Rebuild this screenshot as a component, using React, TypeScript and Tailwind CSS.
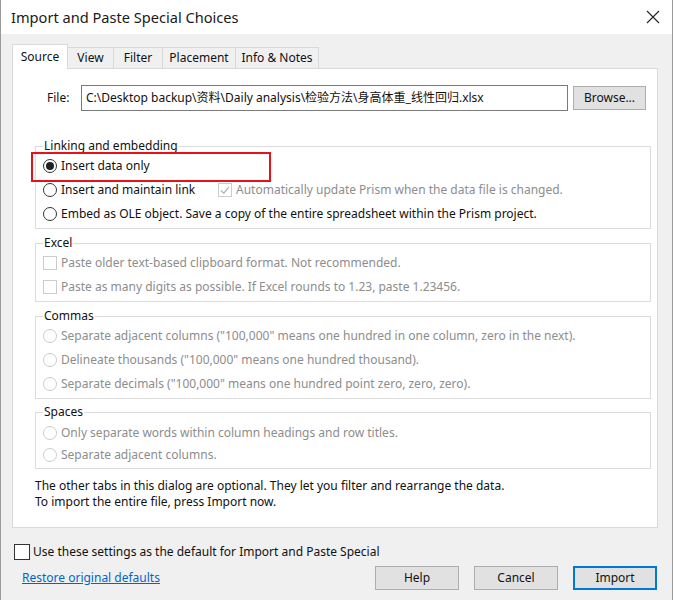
import type { ReactNode } from 'react';

const font = "font-['Noto_Sans','Noto_Sans_CJK_SC',sans-serif]";

function Radio({
  checked = false,
  disabled = false,
  children,
}: {
  checked?: boolean;
  disabled?: boolean;
  children?: ReactNode;
}) {
  return (
    <div className="flex items-center gap-[4px]">
      <span
        className={
          'flex h-[14px] w-[14px] shrink-0 items-center justify-center rounded-full border bg-white ' +
          (disabled ? 'border-[#cccccc]' : 'border-[#333333]')
        }
      >
        {checked && <span className="h-[8px] w-[8px] rounded-full bg-[#222222]" />}
      </span>
      <span className={disabled ? 'text-[#8d8d8d]' : 'text-[#111111]'}>{children}</span>
    </div>
  );
}

function Check({
  checked = false,
  disabled = false,
  children,
}: {
  checked?: boolean;
  disabled?: boolean;
  children?: ReactNode;
}) {
  return (
    <div className="flex items-center gap-[4px]">
      <span
        className={
          'flex h-[14px] w-[14px] shrink-0 items-center justify-center border bg-white ' +
          (disabled ? 'border-[#cccccc]' : 'border-[#333333]')
        }
      >
        {checked && (
          <svg width="12" height="12" viewBox="0 0 12 12">
            <path d="M2 6.5 L4.8 9.2 L10 2.8" fill="none" stroke="#b5b5b5" strokeWidth="1.3" />
          </svg>
        )}
      </span>
      <span className={disabled ? 'text-[#8d8d8d]' : 'text-[#111111]'}>{children}</span>
    </div>
  );
}

function Group({ title, children }: { title: string; children: ReactNode }) {
  return (
    <fieldset className="border border-[#dcdcdc] pl-[7px] pr-2 pb-[2px]">
      <legend className="px-[1px] leading-[16px] text-[#111111]">{title}</legend>
      {children}
    </fieldset>
  );
}

const tabs = [
  { label: 'Source', w: 'w-[56px]' },
  { label: 'View', w: 'w-[47px]' },
  { label: 'Filter', w: 'w-[50px]' },
  { label: 'Placement', w: 'w-[74px]' },
  { label: 'Info & Notes', w: 'w-[84px]' },
];

function Button({ label, primary = false }: { label: string; primary?: boolean }) {
  return (
    <button
      className={
        'h-[24px] w-[84px] bg-[#e1e1e1] text-[#111111] ' +
        (primary ? 'border-2 border-[#0078d7]' : 'border border-[#adadad]')
      }
    >
      {label}
    </button>
  );
}

export default function App() {
  return (
    <div
      className={
        font +
        ' flex h-[600px] w-[673px] flex-col overflow-hidden border-x border-[#9a9a9a] bg-[#f0f0f0] text-[12px] leading-[16px]'
      }
    >
      {/* Title bar */}
      <div className="flex h-[34px] shrink-0 items-center justify-between bg-white pl-[10px] pr-[12px]">
        <span className="text-[14.6px] text-[#1a1a1a]">Import and Paste Special Choices</span>
        <svg width="14" height="14" viewBox="0 0 14 14">
          <path d="M1 1 L13 13 M13 1 L1 13" stroke="#222" strokeWidth="1.1" />
        </svg>
      </div>

      <div className="flex flex-col pl-[11px] pr-[14px] pt-[10px]">
        {/* Tabs */}
        <div className="flex items-end">
          {tabs.map((t, i) =>
            i === 0 ? (
              <div
                key={t.label}
                className={
                  t.w +
                  ' relative z-10 -mb-px flex h-[25px] items-center justify-center border border-b-0 border-[#d9d9d9] bg-white text-[#111111]'
                }
              >
                {t.label}
              </div>
            ) : (
              <div
                key={t.label}
                className={
                  t.w +
                  ' -ml-px flex h-[21px] items-center justify-center border border-b-0 border-[#d9d9d9] bg-[#f0f0f0] text-[#111111]'
                }
              >
                {t.label}
              </div>
            )
          )}
        </div>

        {/* Tab panel */}
        <div className="flex h-[460px] flex-col border border-[#d9d9d9] bg-white pl-[22px] pr-[6px] pt-[16px]">
          <div className="flex items-center">
            <span className="w-[46px] pl-[12px] text-[#111111]">File:</span>
            <div className="flex h-[26px] w-[487px] items-center border border-[#7a7a7a] bg-white pl-[4px] text-[#111111]">
              C:\Desktop backup\资料\Daily analysis\检验方法\身高体重_线性回归.xlsx
            </div>
            <button className="ml-[5px] h-[24px] w-[73px] border border-[#adadad] bg-[#e1e1e1] text-[#111111]">
              Browse...
            </button>
          </div>

          <div className="relative mt-[27px]">
            <Group title="Linking and embedding">
              <div className="flex h-[24px] items-center">
                <Radio checked>Insert data only</Radio>
              </div>
              <div className="flex h-[24px] items-center">
                <div className="w-[175px]">
                  <Radio>Insert and maintain link</Radio>
                </div>
                <Check checked disabled>
                  Automatically update Prism when the data file is changed.
                </Check>
              </div>
              <div className="flex h-[24px] items-center">
                <Radio>Embed as OLE object. Save a copy of the entire spreadsheet within the Prism project.</Radio>
              </div>
            </Group>
            {/* highlight annotation */}
            <div className="pointer-events-none absolute left-[-4px] top-[14px] h-[30px] w-[240px] border-2 border-[#e8111a]" />
          </div>

          <div className="mt-[6px]">
            <Group title="Excel">
              <div className="flex h-[24px] items-center">
                <Check disabled>Paste older text-based clipboard format. Not recommended.</Check>
              </div>
              <div className="flex h-[24px] items-center">
                <Check disabled>Paste as many digits as possible. If Excel rounds to 1.23, paste 1.23456.</Check>
              </div>
            </Group>
          </div>

          <div className="mt-[6px]">
            <Group title="Commas">
              <div className="flex h-[24px] items-center">
                <Radio disabled>
                  Separate adjacent columns ("100,000" means one hundred in one column, zero in the next).
                </Radio>
              </div>
              <div className="flex h-[24px] items-center">
                <Radio disabled>Delineate thousands ("100,000" means one hundred thousand).</Radio>
              </div>
              <div className="flex h-[24px] items-center">
                <Radio disabled>Separate decimals ("100,000" means one hundred point zero, zero, zero).</Radio>
              </div>
            </Group>
          </div>

          <div className="mt-[5px]">
            <Group title="Spaces">
              <div className="pt-[2px]">
                <div className="flex h-[22px] items-center">
                  <Radio disabled>Only separate words within column headings and row titles.</Radio>
                </div>
                <div className="flex h-[22px] items-center">
                  <Radio disabled>Separate adjacent columns.</Radio>
                </div>
              </div>
            </Group>
          </div>

          <div className="mt-[9px] text-[#111111]">
            <p>The other tabs in this dialog are optional. They let you filter and rearrange the data.</p>
            <p>To import the entire file, press Import now.</p>
          </div>
        </div>
      </div>

      {/* Footer */}
      <div className="mt-[16px] flex items-center gap-[3px] pl-[13px]">
        <span className="h-[16px] w-[16px] border border-[#333333] bg-white" />
        <span className="text-[#111111]">Use these settings as the default for Import and Paste Special</span>
      </div>
      <div className="mt-[6px] flex items-center justify-between pl-[21px] pr-[15px]">
        <a className="text-[#0066cc] underline">Restore original defaults</a>
        <div className="flex gap-[15px]">
          <Button label="Help" />
          <Button label="Cancel" />
          <Button label="Import" primary />
        </div>
      </div>
    </div>
  );
}
